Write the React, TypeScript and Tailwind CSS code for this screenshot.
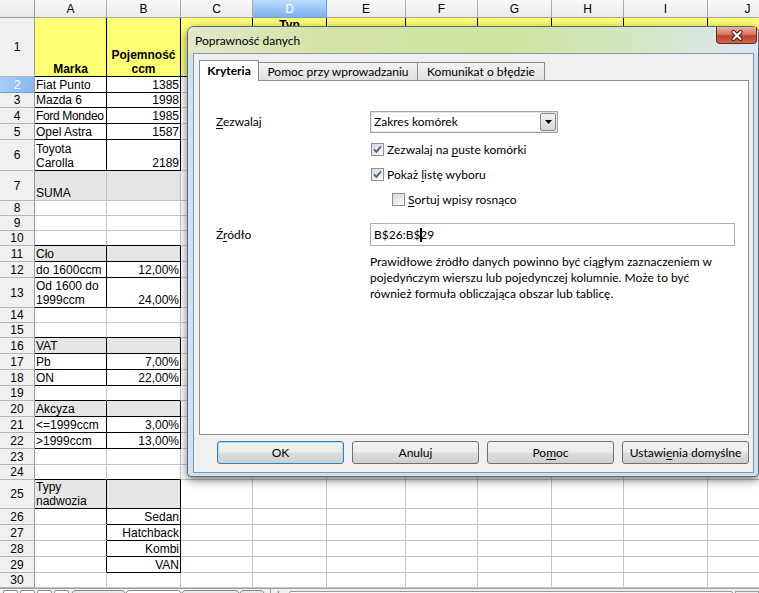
import React from 'react'
import clsx from 'clsx'

type Cell = {
  t?: React.ReactNode
  b?: boolean
  r?: boolean
  c?: boolean
  top?: boolean
  wrap?: boolean
  tight?: boolean
  bg?: string
}

const COLS = ['A', 'B', 'C', 'D', 'E', 'F', 'G', 'H', 'I', 'J']
const COL_W = [72, 74, 72, 74, 79, 72, 74, 72, 84, 80]
const ROW_H = [59, 16, 15, 16, 16, 31, 30, 15, 15, 15, 16, 16, 30, 15, 15, 16, 16, 16, 15, 16, 16, 16, 16, 15, 29, 16, 16, 16, 16, 15]

const YELLOW = 'bg-[#ffff73]'
const GRAY = 'bg-[#e6e6e6]'
const squiggle = 'underline decoration-wavy decoration-[#ff0000] decoration-1 underline-offset-[3px]'

const cells: Record<string, Cell> = {
  A1: { t: 'Marka', b: true, c: true, bg: YELLOW },
  B1: { t: <>Pojemność <span className={squiggle}>ccm</span></>, b: true, c: true, wrap: true, bg: YELLOW },
  D1: { t: 'Typ', b: true, c: true, top: true, bg: YELLOW },
  A2: { t: 'Fiat Punto' },
  B2: { t: '1385', r: true },
  A3: { t: 'Mazda 6' },
  B3: { t: '1998', r: true },
  A4: { t: 'Ford Mondeo', tight: true },
  B4: { t: '1985', r: true },
  A5: { t: 'Opel Astra' },
  B5: { t: '1587', r: true },
  A6: { t: <>Toyota <span className={squiggle}>Carolla</span></>, wrap: true },
  B6: { t: '2189', r: true },
  A7: { t: 'SUMA', bg: GRAY },
  B7: { bg: GRAY },
  A11: { t: 'Cło', bg: GRAY },
  B11: { bg: GRAY },
  A12: { t: 'do 1600ccm' },
  B12: { t: '12,00%', r: true },
  A13: { t: 'Od 1600 do 1999ccm', wrap: true },
  B13: { t: '24,00%', r: true },
  A16: { t: 'VAT', bg: GRAY },
  B16: { bg: GRAY },
  A17: { t: 'Pb' },
  B17: { t: '7,00%', r: true },
  A18: { t: 'ON' },
  B18: { t: '22,00%', r: true },
  A20: { t: 'Akcyza', bg: GRAY },
  B20: { bg: GRAY },
  A21: { t: '<=1999ccm' },
  B21: { t: '3,00%', r: true },
  A22: { t: '>1999ccm' },
  B22: { t: '13,00%', r: true },
  A25: { t: 'Typy nadwozia', wrap: true, bg: GRAY },
  B25: { bg: GRAY },
  B26: { t: 'Sedan', r: true },
  B27: { t: 'Hatchback', r: true },
  B28: { t: 'Kombi', r: true },
  B29: { t: 'VAN', r: true },
}

const boxed = (r: number, c: number) => {
  if (r < 1 || r > 30 || c < 0 || c > 9) return false
  if (r === 1) return true
  if (c > 1) return false
  if (r >= 2 && r <= 6) return true
  if (r >= 11 && r <= 13) return true
  if (r >= 16 && r <= 18) return true
  if (r >= 20 && r <= 22) return true
  if (r === 25) return true
  if (r >= 26 && r <= 29) return c === 1
  return false
}

function Sheet() {
  return (
    <div className="font-['Liberation_Sans',Arial,sans-serif] text-[12px] text-black">
      <div className="flex h-[18px]">
        <div className="w-[35px] shrink-0 border-r border-b border-[#9a9a9a] bg-gradient-to-b from-[#f7f7f7] to-[#e9e9e9]" />
        {COLS.map((l, c) => (
          <div
            key={l}
            className={clsx(
              'flex shrink-0 items-center justify-center border-r border-b',
              l === 'D'
                ? 'border-[#6f9fd6] bg-gradient-to-b from-[#bcdcff] to-[#7cb1ec] text-white'
                : 'border-[#a8a8a8] bg-gradient-to-b from-[#f8f8f8] to-[#ebebeb]'
            )}
            style={{ width: COL_W[c] }}
          >
            {l}
          </div>
        ))}
      </div>
      {ROW_H.map((h, i) => {
        const row = i + 1
        return (
          <div key={row} className="flex" style={{ height: h }}>
            <div
              className={clsx(
                'flex w-[35px] shrink-0 items-center justify-center border-r border-b border-r-[#9a9a9a]',
                row === 2
                  ? 'border-b-[#6f9fd6] bg-gradient-to-r from-[#a9cdf6] to-[#86b8ef] text-white'
                  : 'border-b-[#b4b4b4] bg-[#f0f0f0]'
              )}
            >
              {row}
            </div>
            {COLS.map((l, c) => {
              const cell = cells[`${l}${row}`] ?? {}
              const rb = boxed(row, c) || boxed(row, c + 1)
              const bb = boxed(row, c) || boxed(row + 1, c)
              const bg = cell.bg ?? (row === 1 ? YELLOW : 'bg-white')
              return (
                <div
                  key={l}
                  className={clsx(
                    'flex shrink-0 overflow-hidden border-r border-b px-[1px] leading-[14px]',
                    cell.top ? 'items-start' : 'items-end',
                    cell.c ? 'justify-center text-center' : cell.r ? 'justify-end text-right' : 'justify-start',
                    rb ? 'border-r-black' : 'border-r-[#c6c6c6]',
                    bb ? 'border-b-black' : 'border-b-[#c6c6c6]',
                    cell.b && 'font-bold',
                    cell.tight && 'tracking-[-0.35px]',
                    bg
                  )}
                  style={{ width: COL_W[c] }}
                >
                  {cell.t && <span className={clsx(!cell.wrap && 'whitespace-nowrap')}>{cell.t}</span>}
                </div>
              )
            })}
          </div>
        )
      })}
      <div className="flex h-[22px] items-start border-t border-[#a0a0a0] bg-[#f0f0f0]">
        <div className="flex gap-[2px] pl-[3px] pt-[1px]">
          {[0, 1, 2, 3].map((i) => (
            <div key={i} className="h-[14px] w-[15px] rounded-[2px] border border-[#8c8c8c] bg-gradient-to-b from-white to-[#e4e4e4]" />
          ))}
        </div>
        <div className="ml-[2px] flex pt-[1px] text-[12px]">
          <div className="h-[18px] w-[55px] rounded-t-[5px] border border-[#8c8c8c] bg-[#e8e8e8] text-center">Arkusz1</div>
          <div className="-ml-px h-[18px] w-[57px] rounded-t-[5px] border border-[#8c8c8c] bg-white text-center font-bold">Arkusz2</div>
          <div className="-ml-px h-[18px] w-[59px] rounded-t-[5px] border border-[#8c8c8c] bg-[#e8e8e8] text-center">Arkusz3</div>
          <div className="-ml-px h-[18px] w-[26px] rounded-t-[5px] border border-[#8c8c8c] bg-[#e8e8e8]" />
        </div>
        <div className="ml-[5px] h-[20px] w-px bg-[#9a9a9a]" />
        <div className="ml-[6px] mt-[2px] h-[16px] w-[10px] text-[10px] leading-[10px] text-[#555]">|</div>
        <div className="ml-[2px] mt-[2px] flex h-[18px] w-[445px] justify-center rounded-[2px] border border-[#9a9a9a] bg-gradient-to-b from-[#fafafa] to-[#e2e2e2] text-[9px] leading-[12px] text-[#555]">
          |||
        </div>
        <div className="ml-[2px] mt-[2px] h-[18px] w-[24px] border border-[#9a9a9a] bg-[#ececec]" />
      </div>
    </div>
  )
}

function Check({ checked, children }: { checked?: boolean; children: React.ReactNode }) {
  return (
    <div className="flex h-[13px] items-center">
      <span className="flex h-[13px] w-[13px] shrink-0 items-center justify-center border border-[#8e8f8f] bg-gradient-to-br from-[#d8d8d8] to-[#fbfbfb]">
        {checked && (
          <svg width="9" height="9" viewBox="0 0 9 9">
            <path d="M1 4.3 L3.4 6.8 L8 1.4" fill="none" stroke="#4b5e8c" strokeWidth="1.8" />
          </svg>
        )}
      </span>
      <span className="ml-[3px] leading-[13px]">{children}</span>
    </div>
  )
}

function Btn({ children, focus }: { children: React.ReactNode; focus?: boolean }) {
  return (
    <div
      className={clsx(
        'flex h-[23px] w-[127px] items-center justify-center rounded-[3px] border bg-[linear-gradient(#f3f3f3_0%,#ececec_48%,#dddddd_52%,#cfcfcf_100%)]',
        focus ? 'border-[#3c7fb1] shadow-[inset_0_0_0_1px_#a7dcf6]' : 'border-[#707070]'
      )}
    >
      {children}
    </div>
  )
}

function Dialog() {
  return (
    <div className="absolute left-[187px] top-[26px] h-[451px] w-[572px] rounded-t-[7px] rounded-b-[4px] border border-[#5b6c7c] bg-[#cfe0f1] font-['Lato','Noto_Sans',sans-serif] text-[12px] text-black shadow-[0_3px_10px_rgba(0,0,0,0.55)]">
      <div className="absolute inset-x-0 top-0 h-[27px] rounded-t-[6px] bg-[linear-gradient(90deg,#e3e7cb_0%,#d4e4a8_22%,#cfe39f_55%,#d3e6c0_78%,#dae8f6_100%)]">
        <div className="pl-[7px] pt-[7px] leading-[14px]">Poprawność danych</div>
        <div className="absolute right-[1px] top-0 flex h-[17px] w-[41px] items-center justify-center rounded-b-[4px] border border-t-0 border-[#6e2a1f] bg-[linear-gradient(#eab0a1_0%,#d97a62_45%,#c4412a_55%,#d0654a_100%)]">
          <svg width="14" height="11" viewBox="0 0 14 11">
            <path d="M3.5 2 L10.5 9 M10.5 2 L3.5 9" stroke="#3a1a14" strokeWidth="4" strokeLinecap="round" />
            <path d="M3.5 2 L10.5 9 M10.5 2 L3.5 9" stroke="#ffffff" strokeWidth="2.2" strokeLinecap="round" />
          </svg>
        </div>
      </div>
      <div className="absolute left-[5px] top-[26px] h-[420px] w-[561px] border border-[#8396ad] bg-[#f0f0f0] px-[5px] pt-[6px]">
        <div className="flex h-[21px] items-end">
          <div className="relative z-10 flex h-[21px] w-[60px] items-center justify-center border border-b-0 border-[#898c95] bg-white pb-[1px] font-bold">
            Kryteria
          </div>
          <div className="mb-px flex h-[18px] w-[159px] items-center justify-center border border-b-0 border-l-0 border-[#898c95] bg-gradient-to-b from-[#f3f3f3] to-[#e1e1e1]">
            Pomoc przy wprowadzaniu
          </div>
          <div className="mb-px flex h-[18px] w-[127px] items-center justify-center border border-b-0 border-l-0 border-[#898c95] bg-gradient-to-b from-[#f3f3f3] to-[#e1e1e1]">
            Komunikat o błędzie
          </div>
        </div>
        <div className="-mt-px h-[355px] w-[550px] border border-[#898c95] bg-white pl-[16px] pt-[30px]">
          <div className="flex h-[22px] items-center">
            <span className="w-[154px]">
              <span className="underline underline-offset-2">Z</span>ezwalaj
            </span>
            <div className="relative flex h-[22px] w-[188px] items-center border border-[#a4a4a4] bg-white pl-[3px] shadow-[inset_0_0_0_1px_#e3e3e3]">
              Zakres komórek
              <div className="absolute right-[1px] top-[1px] flex h-[18px] w-[16px] items-center justify-center rounded-[2px] border border-[#8c8c8c] bg-gradient-to-b from-[#f4f4f4] to-[#d4d4d4]">
                <svg width="7" height="4" viewBox="0 0 7 4">
                  <path d="M0 0 H7 L3.5 4 Z" fill="#000" />
                </svg>
              </div>
            </div>
          </div>
          <div className="ml-[155px] mt-[10px] flex flex-col gap-[12px]">
            <Check checked>
              Zezwalaj na <span className="underline underline-offset-2">p</span>uste komórki
            </Check>
            <Check checked>
              Pokaż <span className="underline underline-offset-2">l</span>istę wyboru
            </Check>
            <div className="ml-[21px]">
              <Check>
                <span className="underline underline-offset-2">S</span>ortuj wpisy rosnąco
              </Check>
            </div>
          </div>
          <div className="mt-[17px] flex h-[23px] items-center">
            <span className="w-[154px]">
              Ź<span className="underline underline-offset-2">r</span>ódło
            </span>
            <div className="flex h-[23px] w-[365px] items-center border border-[#abadb3] bg-white pl-[3px]">
              B$26:B$
              <span className="relative -mr-[2px] inline-block h-[14px] w-[2px] bg-black" />
              29
            </div>
          </div>
          <p className="ml-[154px] mt-[8px] whitespace-nowrap leading-[16px]">
            Prawidłowe źródło danych powinno być ciągłym zaznaczeniem w
            <br />
            pojedyńczym wierszu lub pojedynczej kolumnie. Może to być
            <br />
            również formuła obliczająca obszar lub tablicę.
          </p>
        </div>
        <div className="mt-[6px] flex w-[550px] justify-end gap-[8px]">
          <Btn focus>OK</Btn>
          <Btn>Anuluj</Btn>
          <Btn>
            Po<span className="underline underline-offset-2">m</span>oc
          </Btn>
          <Btn>
            Ustawi<span className="underline underline-offset-2">e</span>nia domyślne
          </Btn>
        </div>
      </div>
    </div>
  )
}

export default function App() {
  return (
    <div className="relative h-[593px] w-[759px] overflow-hidden bg-white">
      <Sheet />
      <Dialog />
    </div>
  )
}
